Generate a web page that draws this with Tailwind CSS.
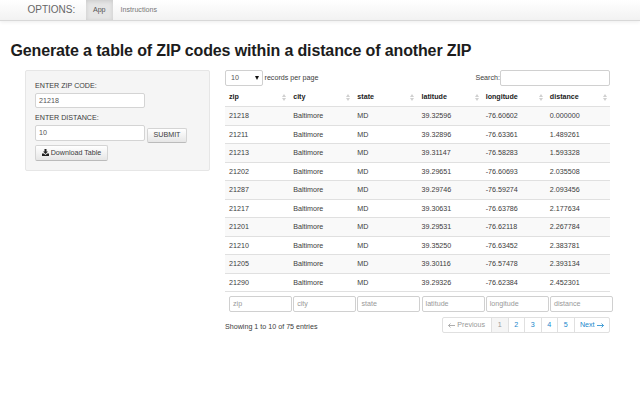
<!DOCTYPE html>
<html lang="en">
<head>
<meta charset="utf-8">
<title>ZIP codes</title>
<script src="https://cdn.jsdelivr.net/npm/@tailwindcss/browser@4"></script>
</head>
<body class="w-[640px] h-[400px] overflow-hidden bg-white font-['Liberation_Sans',Arial,sans-serif] text-[7.15px] leading-[10px] text-[#3c3c3c]">
<nav class="flex h-[21px] items-stretch border-b border-[#d8d8d8] bg-linear-to-b from-white to-[#f2f2f2] pl-[27.5px] shadow-[0_1px_4px_rgba(0,0,0,0.08)]">
  <span class="w-[58px] whitespace-nowrap text-[10px] leading-[20px] text-[#666]">OPTIONS:</span>
  <a class="w-[27.5px] bg-[#e5e5e5] text-center leading-[20px] text-[#555] shadow-[inset_0_1px_4px_rgba(0,0,0,0.125)]">App</a>
  <a class="pl-[7.5px] leading-[20px] text-[#777]">Instructions</a>
</nav>
<h2 class="mt-[19px] ml-[10.5px] whitespace-nowrap text-[16px] leading-[21px] font-bold tracking-[-0.135px] text-[#1c1c1c]">Generate a table of ZIP codes within a distance of another ZIP</h2>
<main class="mt-[9px] flex items-start pl-[25px]">
  <form class="h-[101px] w-[185px] shrink-0 rounded-[2px] border border-[#e6e6e6] bg-[#f5f5f5] pt-[10px] pl-[9px]">
    <label class="block h-[12px]">ENTER ZIP CODE:</label>
    <div class="h-[15px] w-[110px] rounded-[2px] border border-[#d4d4d4] bg-white pl-[3px] leading-[14px] text-[#555]">21218</div>
    <label class="mt-[5px] block h-[12px]">ENTER DISTANCE:</label>
    <div class="flex">
      <div class="h-[16px] w-[110px] rounded-[2px] border border-[#d4d4d4] bg-white pl-[3px] leading-[14px] text-[#555]">10</div>
      <button type="button" class="mt-[3px] ml-[2px] h-[15px] w-[40px] rounded-[2px] border border-[#d4d4d4] border-b-[#bbb] bg-linear-to-b from-white to-[#e6e6e6] leading-[13px]">SUBMIT</button>
    </div>
    <button type="button" class="mt-[2px] flex h-[16px] w-[73px] items-center justify-center gap-[2px] rounded-[2px] border border-[#d4d4d4] border-b-[#bbb] bg-linear-to-b from-white to-[#e6e6e6]">
      <svg class="-mt-px h-[7px] w-[7px]" viewBox="0 0 14 14" fill="#222"><path d="M5 0h4v5h3L7 10 2 5h3zM0 9h3.500L7 12l3.500-3H14v5H0z"/></svg><span>Download Table</span>
    </button>
  </form>
  <section class="ml-[15px] w-[385px] shrink-0">
    <div class="flex h-[16px] items-center">
      <div class="flex h-[16px] w-[38px] items-center justify-between rounded-[2px] border border-[#d0d0d0] bg-white pr-[3px] pl-[5px] text-[#555]">10<svg class="h-[4px] w-[4px]" viewBox="0 0 4 4"><path d="M0 0h4L2 4z" fill="#111"/></svg></div>
      <span class="ml-[1.500px]">records per page</span>
      <span class="ml-auto">Search:</span>
      <div class="h-[16px] w-[110px] rounded-[2px] border border-[#d0d0d0] bg-white"></div>
    </div>
    <div id="head" class="grid h-[20px] grid-cols-6 pt-[6px] font-bold text-[#222]"></div>
    <div id="rows"></div>
    <div id="filters" class="flex w-[390px] gap-[1.200px] pt-[4px] pl-[4px]"></div>
    <div class="mt-[6px] flex items-start justify-between">
      <span class="mt-[4px]">Showing 1 to 10 of 75 entries</span>
      <div class="-mt-px flex h-[16px] overflow-hidden rounded-[2px] border border-[#e0e0e0] text-center leading-[14px] text-[#1a88cc]">
        <span class="flex w-[48.500px] items-center justify-center gap-[2px] text-[#999]"><svg class="h-[5px] w-[7px]" viewBox="0 0 7 5" fill="none" stroke="#999" stroke-width=".8"><path d="M7 2.500H.6M2.500.5l-2 2 2 2"/></svg>Previous</span>
        <span class="w-[16.500px] border-l border-[#e0e0e0] bg-[#f5f5f5] text-[#999]">1</span>
        <span class="w-[16.500px] border-l border-[#e0e0e0]">2</span>
        <span class="w-[16.500px] border-l border-[#e0e0e0]">3</span>
        <span class="w-[16.500px] border-l border-[#e0e0e0]">4</span>
        <span class="w-[16.500px] border-l border-[#e0e0e0]">5</span>
        <span class="flex w-[35.500px] items-center justify-center gap-[2px] border-l border-[#e0e0e0]">Next<svg class="h-[5px] w-[7px]" viewBox="0 0 7 5" fill="none" stroke="#1a88cc" stroke-width=".8"><path d="M0 2.500h6.400M4.500.5l2 2-2 2"/></svg></span>
      </div>
    </div>
  </section>
</main>
<script>
const cols = ['zip','city','state','latitude','longitude','distance'];
const data = [
 ['21218','39.32596','-76.60602','0.000000'],['21211','39.32896','-76.63361','1.489261'],
 ['21213','39.31147','-76.58283','1.593328'],['21202','39.29651','-76.60693','2.035508'],
 ['21287','39.29746','-76.59274','2.093456'],['21217','39.30631','-76.63786','2.177634'],
 ['21201','39.29531','-76.62118','2.267784'],['21210','39.35250','-76.63452','2.383781'],
 ['21205','39.30116','-76.57478','2.393134'],['21290','39.29326','-76.62384','2.452301']];
document.getElementById('head').innerHTML = cols.map(c => `<div class="flex justify-between pl-[4px] pr-[3px]"><span>${c}</span><svg class="mt-[2px] h-[7px] w-[4px]" viewBox="0 0 4 7" fill="#d0d0d0"><path d="M0 3L2 0l2 3zM0 4h4L2 7z"/></svg></div>`).join('');
document.getElementById('rows').innerHTML = data.map((r, i) => `<div class="grid h-[18.5px] grid-cols-6 border-t border-[#e0e0e0] leading-[18px] ${i % 2 ? 'bg-white' : 'bg-[#f9f9f9]'}">` + [r[0],'Baltimore','MD',r[1],r[2],r[3]].map(v => `<span class="pl-[4px]">${v}</span>`).join('') + '</div>').join('') + '<div class="h-px bg-[#e0e0e0]"></div>';
document.getElementById('filters').innerHTML = cols.map(c => `<div class="h-[16px] w-[63px] shrink-0 rounded-[2px] border border-[#d0d0d0] pl-[3px] leading-[14px] text-[#999]">${c}</div>`).join('');
</script>
</body>
</html>
